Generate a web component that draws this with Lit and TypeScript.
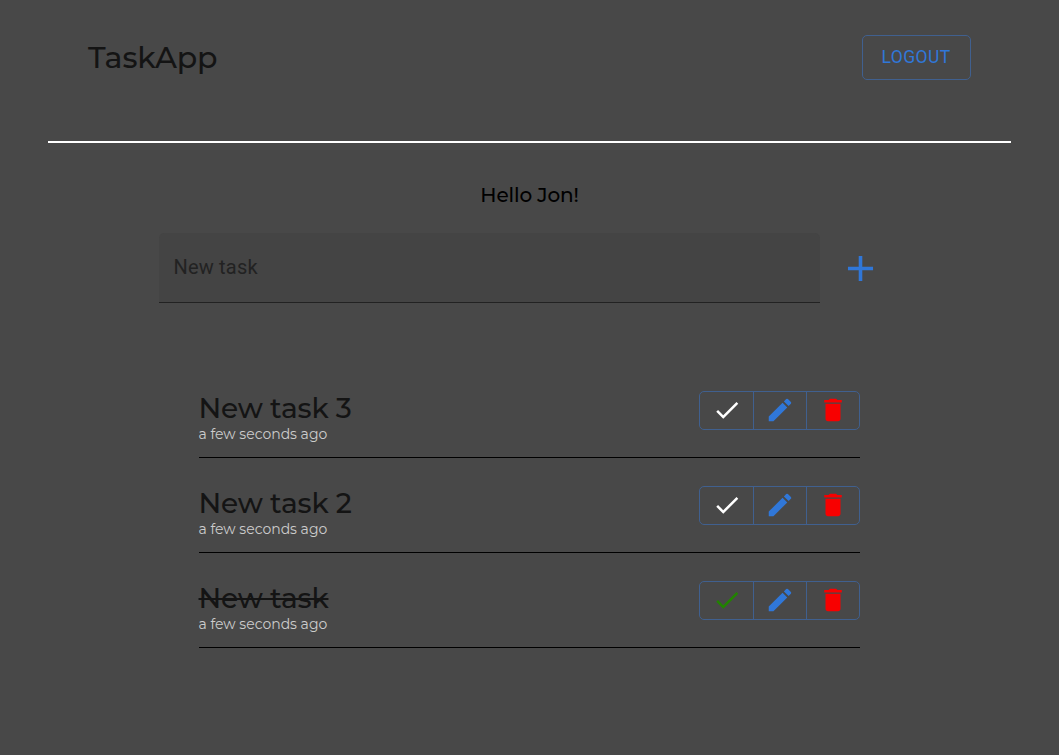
import { LitElement, html, css, svg } from "lit";
import { customElement, property, state } from "lit/decorators.js";
import { classMap } from "lit/directives/class-map.js";

interface Task {
  title: string;
  when: string;
  done: boolean;
}

const icon = (d: string) => html`<svg viewBox="0 0 24 24" aria-hidden="true">${svg`<path d=${d}></path>`}</svg>`;
const CHECK = "M9 16.17L4.83 12l-1.42 1.41L9 19 21 7l-1.41-1.41z";
const EDIT =
  "M3 17.25V21h3.75L17.81 9.94l-3.75-3.75L3 17.25zM20.71 7.04c.39-.39.39-1.02 0-1.41l-2.34-2.34a.9959.9959 0 0 0-1.41 0l-1.83 1.83 3.75 3.75 1.83-1.83z";
const TRASH = "M6 19c0 1.1.9 2 2 2h8c1.1 0 2-.9 2-2V7H6v12zM19 4h-3.5l-1-1h-5l-1 1H5v2h14V4z";
const PLUS = "M19 13h-6v6h-2v-6H5v-2h6V5h2v6h6v2z";

@customElement("task-row")
export class TaskRow extends LitElement {
  @property({ attribute: false }) task!: Task;

  static styles = css`
    :host {
      display: flex;
      justify-content: space-between;
      box-sizing: border-box;
      height: 95px;
      padding-top: 28px;
      border-bottom: 1px solid #000;
    }
    .title {
      margin: 0 0 0 -0.5px;
      height: 35px;
      line-height: 35px;
      font-size: 28px;
      font-weight: 500;
      letter-spacing: -0.17px;
      color: #141414;
      white-space: nowrap;
    }
    .done .title {
      text-decoration: line-through;
      text-decoration-thickness: 2px;
    }
    .when {
      margin-left: -0.5px;
      height: 17px;
      line-height: 17px;
      font-size: 14px;
      letter-spacing: 0;
      color: #cccccc;
      white-space: nowrap;
    }
    .actions {
      display: grid;
      grid-template-columns: 53px 53px 53px;
      box-sizing: border-box;
      width: 161px;
      height: 39px;
      border: 1px solid #40608f;
      border-radius: 5px;
    }
    button {
      display: flex;
      align-items: center;
      justify-content: center;
      box-sizing: border-box;
      margin: 0;
      padding: 0 0 1px;
      border: 0;
      background: none;
      color: #3077d8;
    }
    button + button {
      border-left: 1px solid #40608f;
    }
    .check {
      padding-left: 1px;
      color: #fff;
    }
    .done .check {
      color: #218300;
    }
    .remove {
      padding-right: 1px;
      color: #f80000;
    }
    svg {
      width: 30px;
      height: 30px;
      fill: currentColor;
    }
    .row {
      display: flex;
      justify-content: space-between;
      width: 100%;
    }
  `;

  render() {
    return html`<div class=${classMap({ row: true, done: this.task.done })}>
      <div>
        <h2 class="title">${this.task.title}</h2>
        <div class="when">${this.task.when}</div>
      </div>
      <div class="actions">
        <button class="check" aria-label="Complete">${icon(CHECK)}</button>
        <button aria-label="Edit">${icon(EDIT)}</button>
        <button class="remove" aria-label="Delete">${icon(TRASH)}</button>
      </div>
    </div>`;
  }
}

@customElement("app-root")
export class AppRoot extends LitElement {
  @state() private tasks: Task[] = [
    { title: "New task 3", when: "a few seconds ago", done: false },
    { title: "New task 2", when: "a few seconds ago", done: false },
    { title: "New task", when: "a few seconds ago", done: true },
  ];

  static styles = css`
    :host {
      display: block;
      box-sizing: border-box;
      height: 755px;
      padding: 0 48px;
      overflow: hidden;
      background: #484848;
      font-family: Montserrat, Inter, sans-serif;
    }
    header {
      display: flex;
      justify-content: space-between;
      align-items: flex-start;
      box-sizing: border-box;
      height: 143px;
      padding: 35px 40px 0;
      border-bottom: 2px solid #fff;
    }
    .brand {
      margin: 0;
      line-height: 45px;
      font-size: 30px;
      font-weight: 500;
      letter-spacing: -0.15px;
      color: #141414;
    }
    .logout {
      box-sizing: border-box;
      width: 109px;
      height: 45px;
      margin: 0;
      padding: 0 1px 2px 0;
      border: 1px solid #40608f;
      border-radius: 5px;
      background: none;
      font: 400 17.5px/30px Roboto, sans-serif;
      letter-spacing: 0.4px;
      color: #3077d8;
    }
    .greeting {
      margin: 38px 0 0;
      height: 28px;
      line-height: 28px;
      text-align: center;
      font-size: 20px;
      font-weight: 500;
      letter-spacing: -0.12px;
      color: #000;
    }
    .add {
      display: flex;
      align-items: center;
      gap: 19px;
      margin: 24px 0 0 111px;
      height: 70px;
    }
    .field {
      box-sizing: border-box;
      width: 661px;
      height: 70px;
      padding: 0 14.5px;
      border-bottom: 1px solid #222;
      border-radius: 5px 5px 0 0;
      background: #444;
      font: 400 20px/69px Roboto, sans-serif;
      letter-spacing: 0.19px;
      color: #222;
    }
    .plus {
      display: flex;
      padding: 1px 0 0;
      border: 0;
      background: none;
      color: #3077d8;
    }
    .plus svg {
      width: 43px;
      height: 43px;
      fill: currentColor;
    }
    .list {
      width: 661px;
      margin: 60px 0 0 151px;
    }
  `;

  render() {
    return html`
      <header>
        <h1 class="brand">TaskApp</h1>
        <button class="logout">LOGOUT</button>
      </header>
      <p class="greeting">Hello Jon!</p>
      <div class="add">
        <div class="field">New task</div>
        <button class="plus" aria-label="Add task">${icon(PLUS)}</button>
      </div>
      <div class="list">${this.tasks.map((t) => html`<task-row .task=${t}></task-row>`)}</div>
    `;
  }
}
